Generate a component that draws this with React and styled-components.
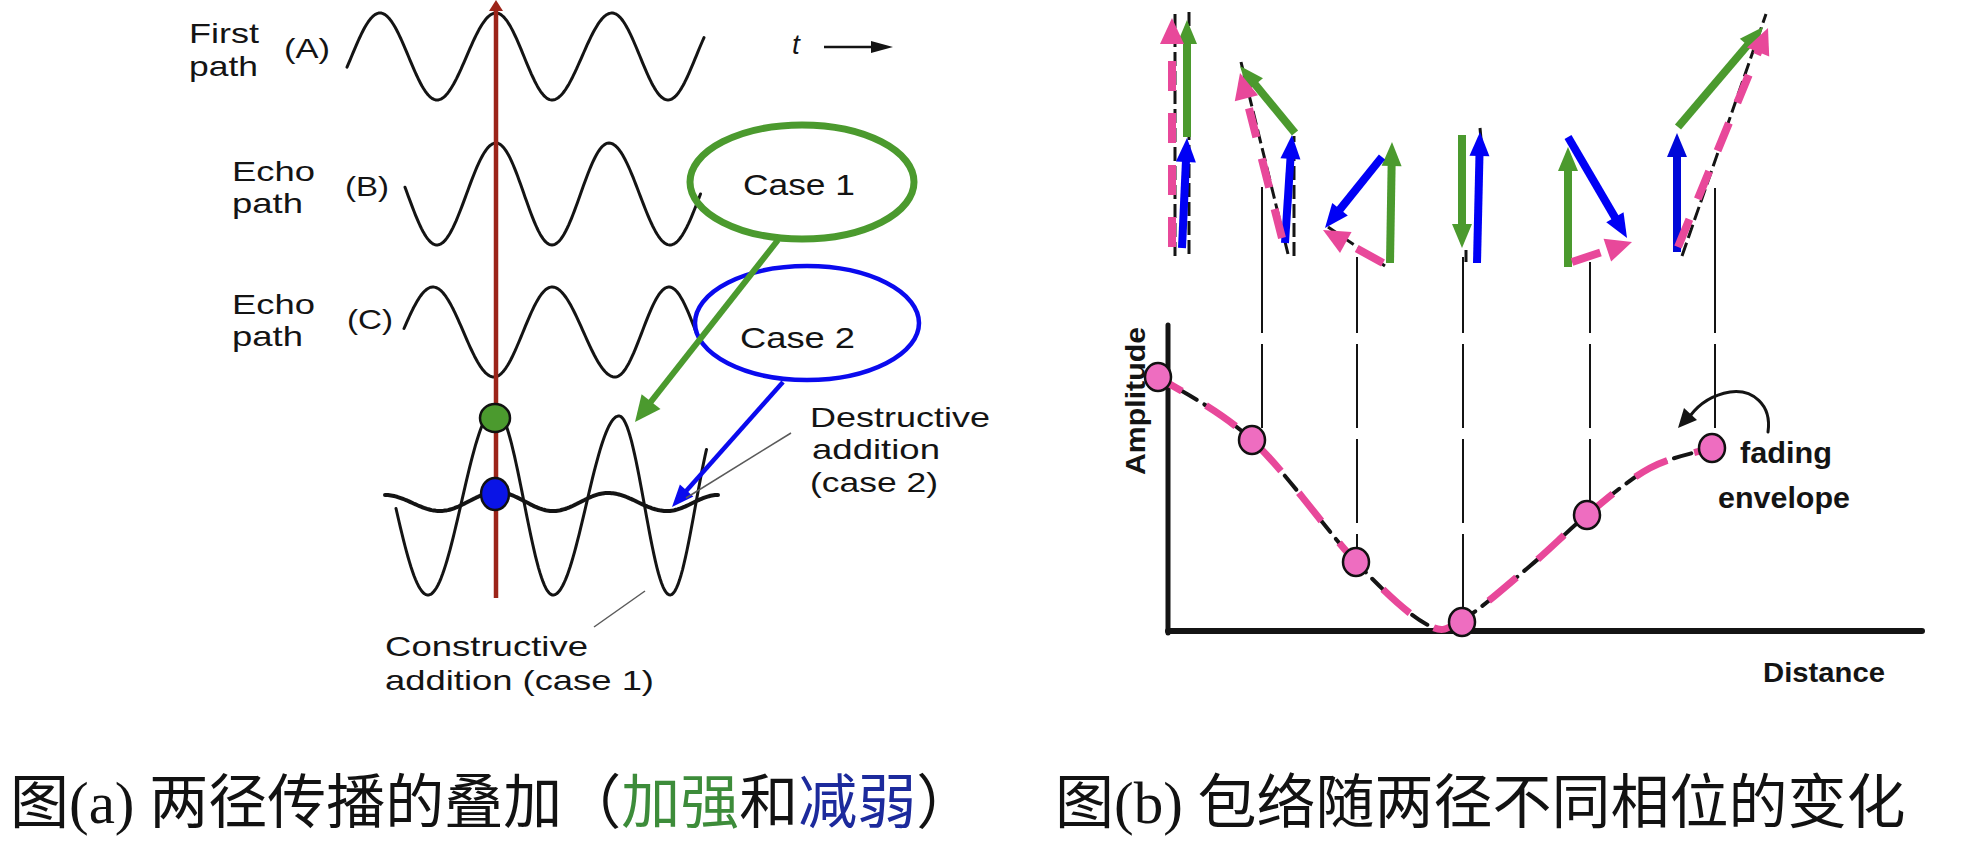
import React from "react";
import styled, { createGlobalStyle } from "styled-components";

const GlobalStyle = createGlobalStyle`
  html, body {
    margin: 0;
    padding: 0;
    background: #ffffff;
  }
  body {
    font-family: "Liberation Sans", Arial, sans-serif;
  }
`;

const GREEN = "#4b9a2e";
const BLUE = "#0000f5";
const PINK = "#e8489a";
const DOT_PINK = "#ee6dc0";
const RED = "#9c2419";
const INK = "#141414";

const Page = styled.div`
  display: flex;
  width: 1973px;
  height: 846px;
  overflow: hidden;
  background: #ffffff;
`;

const Figure = styled.figure`
  margin: 0;
  display: flex;
  flex-direction: column;
  width: ${(p) => p.$width}px;
  flex: none;
`;

const Plot = styled.svg`
  display: block;
  width: 100%;
  height: 774px;
  overflow: visible;
`;

const Caption = styled.figcaption`
  padding-left: ${(p) => p.$indent}px;
  font-family: "Liberation Serif", "Noto Sans CJK SC", serif;
  font-size: 59px;
  line-height: 59px;
  color: #121212;
  white-space: nowrap;
`;

const Tint = styled.span`
  color: ${(p) => p.$color};
`;

const Label = styled.text`
  font-family: "Liberation Sans", Arial, sans-serif;
  font-size: ${(p) => p.$size || 28}px;
  font-weight: ${(p) => (p.$bold ? 700 : 400)};
  font-style: ${(p) => (p.$italic ? "italic" : "normal")};
  fill: ${INK};
`;

const Trace = styled.path`
  fill: none;
  stroke: ${(p) => p.$color || INK};
  stroke-width: ${(p) => p.$w || 3}px;
  stroke-linecap: ${(p) => p.$cap || "round"};
  stroke-linejoin: round;
`;

const Ring = styled.ellipse`
  fill: none;
  stroke: ${(p) => p.$color};
  stroke-width: ${(p) => p.$w}px;
`;

const Dot = styled.ellipse`
  fill: ${(p) => p.$color};
  stroke: #111111;
  stroke-width: 2.5px;
`;

const Rule = styled.line`
  stroke: ${(p) => p.$color || INK};
  stroke-width: ${(p) => p.$w || 2}px;
  stroke-linecap: ${(p) => p.$cap || "butt"};
`;

// waveform through measured extrema, cosine-shaped between them
const wave = (from, to, ext) => {
  const n = ext.length;
  const first = [ext[0][0] - (ext[1][0] - ext[0][0]), ext[1][1]];
  const last = [ext[n - 1][0] + (ext[n - 1][0] - ext[n - 2][0]), ext[n - 2][1]];
  const k = [first, ...ext, last];
  const d = [];
  for (let x = from; x <= to + 0.01; x += 1.5) {
    let i = 0;
    while (i < k.length - 2 && x > k[i + 1][0]) i++;
    const [x0, y0] = k[i];
    const [x1, y1] = k[i + 1];
    const t = (x - x0) / (x1 - x0);
    const y = y0 + ((y1 - y0) * (1 - Math.cos(Math.PI * t))) / 2;
    d.push(`${x.toFixed(1)} ${y.toFixed(1)}`);
  }
  return "M" + d.join(" L");
};

const smooth = (pts) => {
  let d = `M${pts[0][0]},${pts[0][1]}`;
  for (let i = 0; i < pts.length - 1; i++) {
    const p0 = pts[i - 1] || pts[i];
    const p1 = pts[i];
    const p2 = pts[i + 1];
    const p3 = pts[i + 2] || p2;
    const c1 = [p1[0] + (p2[0] - p0[0]) / 6, p1[1] + (p2[1] - p0[1]) / 6];
    const c2 = [p2[0] - (p3[0] - p1[0]) / 6, p2[1] - (p3[1] - p1[1]) / 6];
    d += ` C${c1} ${c2} ${p2}`;
  }
  return d;
};

function Arrow({ from, to, color, w = 8, len = 24, half = 11, dash }) {
  const [x1, y1] = from;
  const [x2, y2] = to;
  const l = Math.hypot(x2 - x1, y2 - y1);
  const ux = (x2 - x1) / l;
  const uy = (y2 - y1) / l;
  const bx = x2 - ux * len;
  const by = y2 - uy * len;
  const px = -uy * half;
  const py = ux * half;
  return (
    <g>
      <line
        x1={x1}
        y1={y1}
        x2={bx + ux * 3}
        y2={by + uy * 3}
        stroke={color}
        strokeWidth={w}
        strokeDasharray={dash}
      />
      <polygon
        points={`${x2},${y2} ${bx + px},${by + py} ${bx - px},${by - py}`}
        fill={color}
      />
    </g>
  );
}

// long dashed drop lines share the same gaps across the plot
const GAPS = [333, 428, 523, 618];
function Drop({ x, top, bottom }) {
  const parts = [];
  let y = top;
  GAPS.forEach((g) => {
    if (g > y && g < bottom) {
      parts.push([y, g]);
      y = g + 11;
    }
  });
  if (y < bottom) parts.push([y, bottom]);
  return (
    <g>
      {parts.map(([a, b]) => (
        <Rule key={a} x1={x} y1={a} x2={x} y2={b} $w={2} />
      ))}
    </g>
  );
}

const waves = {
  a: wave(347, 705, [
    [380, 13], [437, 100], [496, 13], [552, 100], [612, 13], [668, 100],
  ]),
  b: wave(405, 701, [
    [437, 245], [496, 143], [552, 245], [609, 143], [670, 245],
  ]),
  c: wave(404, 697, [
    [433, 287], [494, 377], [552, 287], [615, 377], [669, 287],
  ]),
  sum: wave(396, 707, [
    [428, 595], [495, 409], [553, 595], [619, 416], [670, 595],
  ]),
  diff: wave(385, 719, [
    [385, 495], [440, 511], [497, 492], [553, 511], [608, 493], [667, 511], [718, 495],
  ]),
};

function Superposition() {
  return (
    <Plot viewBox="0 0 1045 774">
      <Label x={189} y={43} textLength={70} lengthAdjust="spacingAndGlyphs">First</Label>
      <Label x={189} y={76} textLength={69} lengthAdjust="spacingAndGlyphs">path</Label>
      <Label x={284} y={58} textLength={46} lengthAdjust="spacingAndGlyphs">(A)</Label>

      <Label x={232} y={181} textLength={83} lengthAdjust="spacingAndGlyphs">Echo</Label>
      <Label x={232} y={213} textLength={71} lengthAdjust="spacingAndGlyphs">path</Label>
      <Label x={345} y={196} textLength={44} lengthAdjust="spacingAndGlyphs">(B)</Label>

      <Label x={232} y={314} textLength={83} lengthAdjust="spacingAndGlyphs">Echo</Label>
      <Label x={232} y={346} textLength={71} lengthAdjust="spacingAndGlyphs">path</Label>
      <Label x={347} y={329} textLength={46} lengthAdjust="spacingAndGlyphs">(C)</Label>

      <Label x={792} y={54} $italic>t</Label>
      <Arrow from={[824, 47]} to={[893, 47]} color={INK} w={2.5} len={22} half={6} />

      <Trace d={waves.a} $w={3} />
      <Trace d={waves.b} $w={3} />
      <Trace d={waves.c} $w={3} />
      <Trace d={waves.sum} $w={3} />
      <Trace d={waves.diff} $w={4} />

      <Rule x1={496} y1={8} x2={496} y2={598} $color={RED} $w={4.5} />
      <polygon points="496,0 489,11 503,11" fill={RED} />

      <Dot cx={495} cy={418} rx={15} ry={14} $color={GREEN} />
      <Dot cx={495} cy={494} rx={14} ry={16} $color="#0a14e6" />

      <Ring cx={802} cy={182} rx={112} ry={57} $color={GREEN} $w={7} />
      <Ring cx={807} cy={323} rx={112} ry={57} $color="#0a0aee" $w={4.5} />
      <Label x={743} y={195} $size={30} textLength={112} lengthAdjust="spacingAndGlyphs">Case 1</Label>
      <Label x={740} y={348} $size={30} textLength={115} lengthAdjust="spacingAndGlyphs">Case 2</Label>

      <Arrow from={[778, 240]} to={[635, 422]} color={GREEN} w={6} len={26} half={12} />
      <Arrow from={[783, 382]} to={[672, 507]} color="#0a0aee" w={4.5} len={22} half={9} />

      <Rule x1={791} y1={433} x2={686} y2={498} $color="#5a5a5a" $w={1.5} />
      <Rule x1={645} y1={591} x2={594} y2={627} $color="#5a5a5a" $w={1.5} />

      <Label x={810} y={427} textLength={180} lengthAdjust="spacingAndGlyphs">Destructive</Label>
      <Label x={812} y={459} textLength={128} lengthAdjust="spacingAndGlyphs">addition</Label>
      <Label x={810} y={492} textLength={128} lengthAdjust="spacingAndGlyphs">(case 2)</Label>

      <Label x={385} y={656} textLength={203} lengthAdjust="spacingAndGlyphs">Constructive</Label>
      <Label x={385} y={690} textLength={269} lengthAdjust="spacingAndGlyphs">addition (case 1)</Label>
    </Plot>
  );
}

const phasors = [
  { from: [1182, 248], to: [1187, 138], color: BLUE },
  { from: [1187, 137], to: [1187, 20], color: GREEN },
  { from: [1172, 247], to: [1172, 18], color: PINK, dash: true },

  { from: [1285, 243], to: [1292, 135], color: BLUE },
  { from: [1295, 133], to: [1240, 66], color: GREEN },
  { from: [1282, 238], to: [1240, 73], color: PINK, dash: true },

  { from: [1390, 263], to: [1392, 142], color: GREEN },
  { from: [1382, 157], to: [1325, 228], color: BLUE },
  { from: [1383, 263], to: [1323, 230], color: PINK, dash: true },

  { from: [1462, 135], to: [1462, 248], color: GREEN },
  { from: [1477, 263], to: [1480, 132], color: BLUE },

  { from: [1568, 267], to: [1568, 147], color: GREEN },
  { from: [1568, 137], to: [1627, 238], color: BLUE },
  { from: [1572, 262], to: [1632, 242], color: PINK, dash: true },

  { from: [1677, 252], to: [1677, 133], color: "#0008d8" },
  { from: [1678, 127], to: [1763, 27], color: GREEN },
  { from: [1678, 247], to: [1768, 28], color: PINK, dash: true },
];

const outlines = [
  [[1175, 256], [1175, 10]],
  [[1189, 254], [1189, 12]],
  [[1288, 254], [1241, 62]],
  [[1294, 256], [1294, 136]],
  [[1385, 266], [1328, 227]],
  [[1466, 262], [1466, 250]],
  [[1480, 128], [1482, 150]],
  [[1682, 256], [1766, 14]],
];

const envelope = smooth([
  [1158, 377], [1252, 440], [1356, 562], [1426, 624], [1462, 620],
  [1530, 566], [1587, 515], [1650, 468], [1712, 448],
]);

const samples = [
  [1158, 377], [1252, 440], [1356, 562], [1462, 622], [1587, 515], [1712, 448],
];

function Envelope() {
  return (
    <Plot viewBox="1045 0 928 774">
      {outlines.map(([a, b]) => (
        <Rule key={a.join()} x1={a[0]} y1={a[1]} x2={b[0]} y2={b[1]} $w={3} strokeDasharray="14 5" />
      ))}
      {phasors.map((p) => (
        <Arrow
          key={`${p.from}-${p.to}`}
          from={p.from}
          to={p.to}
          color={p.color}
          w={8}
          len={p.dash ? 26 : 24}
          half={p.dash ? 12 : 10}
          dash={p.dash ? "30 22" : undefined}
        />
      ))}

      <Drop x={1262} top={187} bottom={428} />
      <Drop x={1357} top={257} bottom={549} />
      <Drop x={1463} top={257} bottom={609} />
      <Drop x={1590} top={262} bottom={502} />
      <Drop x={1715} top={188} bottom={435} />

      <Rule x1={1168} y1={325} x2={1168} y2={633} $w={5} $cap="round" />
      <Rule x1={1168} y1={631} x2={1922} y2={631} $w={6} $cap="round" />

      <Trace d={envelope} $w={4} strokeDasharray="18 9" />
      <Trace d={envelope} $color={PINK} $w={7} $cap="butt" strokeDasharray="36 28" strokeDashoffset={8} />

      {samples.map(([x, y]) => (
        <Dot key={x} cx={x} cy={y} rx={13} ry={14} $color={DOT_PINK} />
      ))}

      <Trace d="M1768,432 C1772,404 1752,389 1730,392 C1712,395 1699,404 1690,416" $w={3} />
      <polygon points="1678,428 1684,408 1697,420" fill={INK} />

      <Label
        x={0}
        y={0}
        $size={28}
        $bold
        textLength={148}
        lengthAdjust="spacingAndGlyphs"
        transform="translate(1145 475) rotate(-90)"
      >
        Amplitude
      </Label>
      <Label x={1740} y={463} $size={30} $bold textLength={92} lengthAdjust="spacingAndGlyphs">fading</Label>
      <Label x={1718} y={508} $size={30} $bold textLength={132} lengthAdjust="spacingAndGlyphs">envelope</Label>
      <Label x={1763} y={682} $size={28} $bold textLength={122} lengthAdjust="spacingAndGlyphs">Distance</Label>
    </Plot>
  );
}

export default function App() {
  return (
    <>
      <GlobalStyle />
      <Page>
        <Figure $width={1045}>
          <Superposition />
          <Caption $indent={10}>
            图(a) 两径传播的叠加（<Tint $color="#3d8c3a">加强</Tint>和
            <Tint $color="#1c2a9c">减弱</Tint>）
          </Caption>
        </Figure>
        <Figure $width={928}>
          <Envelope />
          <Caption $indent={10}>图(b) 包络随两径不同相位的变化</Caption>
        </Figure>
      </Page>
    </>
  );
}
